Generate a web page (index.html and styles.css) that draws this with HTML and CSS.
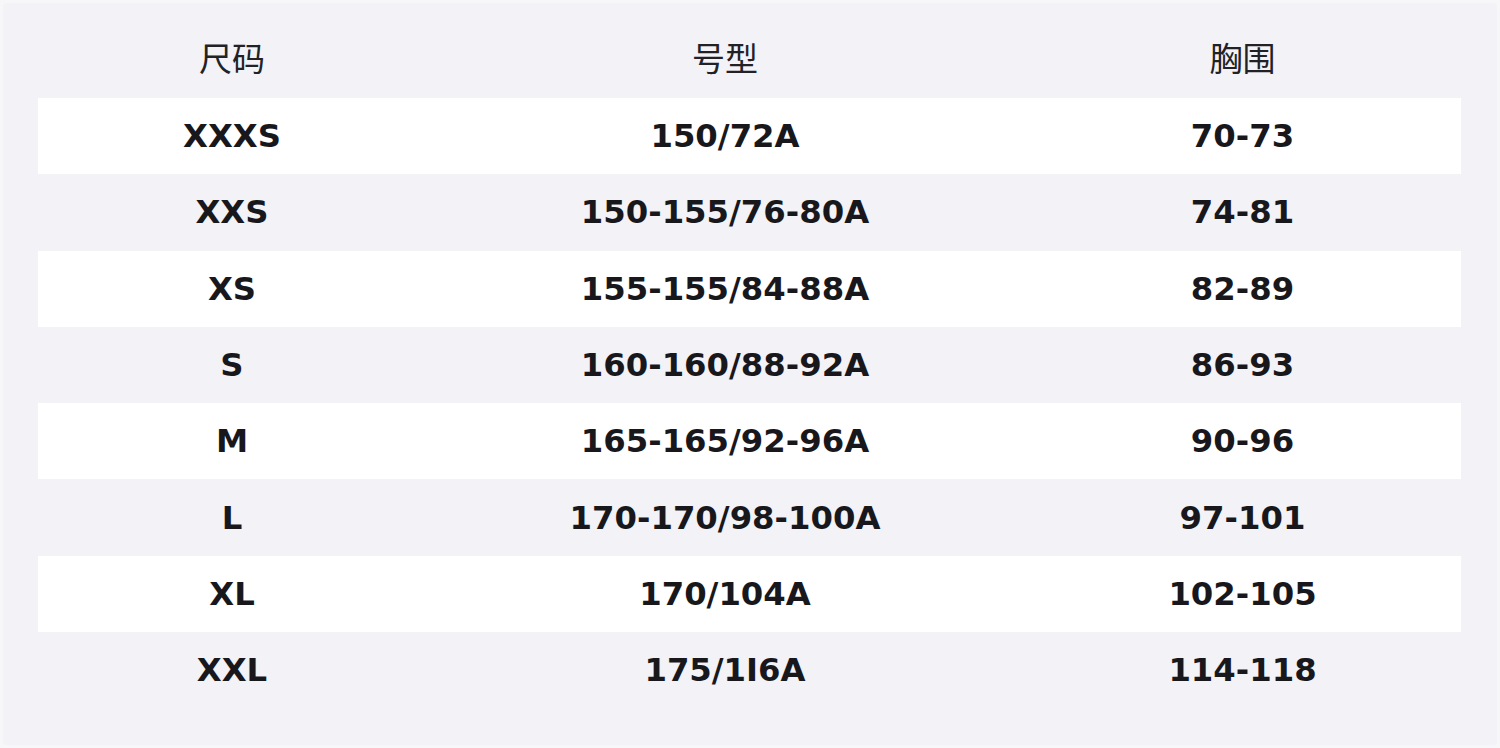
FILE: index.html
```html
<!DOCTYPE html>
<html lang="zh">
<head>
<meta charset="utf-8">
<title>尺码表</title>
<link rel="stylesheet" href="styles.css">
</head>
<body>
<div class="sheet">
  <table class="size-table">
    <colgroup>
      <col class="c1"><col class="c2"><col class="c3">
    </colgroup>
    <thead>
      <tr><th>尺码</th><th>号型</th><th>胸围</th></tr>
    </thead>
    <tbody>
      <tr><td>XXXS</td><td>150/72A</td><td>70-73</td></tr>
      <tr><td>XXS</td><td>150-155/76-80A</td><td>74-81</td></tr>
      <tr><td>XS</td><td>155-155/84-88A</td><td>82-89</td></tr>
      <tr><td>S</td><td>160-160/88-92A</td><td>86-93</td></tr>
      <tr><td>M</td><td>165-165/92-96A</td><td>90-96</td></tr>
      <tr><td>L</td><td>170-170/98-100A</td><td>97-101</td></tr>
      <tr><td>XL</td><td>170/104A</td><td>102-105</td></tr>
      <tr><td>XXL</td><td>175/1I6A</td><td>114-118</td></tr>
    </tbody>
  </table>
</div>
</body>
</html>
```
FILE: styles.css
```css
html, body {
  margin: 0;
  padding: 0;
  background: #f7f7fa;
}
body {
  width: 1500px;
  height: 748px;
  overflow: hidden;
}
.sheet {
  margin: 3px;
  height: 742px;
  box-sizing: border-box;
  background: #f2f2f7;
  border-radius: 4px;
  padding: 19px 35px 0 35px;
}
.size-table {
  width: 1423px;
  border-collapse: collapse;
  table-layout: fixed;
}
.c1 { width: 388px; }
.c2 { width: 598px; }
.c3 { width: 437px; }
.size-table th,
.size-table td {
  padding: 0;
  text-align: center;
  vertical-align: middle;
}
.size-table th {
  font-family: "Noto Sans CJK SC", "Noto Sans", sans-serif;
  font-weight: 400;
  font-size: 33px;
  color: #222226;
  padding-bottom: 6px;
  height: 70px;
}
.size-table td {
  height: 76.3px;
  font-family: "DejaVu Sans", sans-serif;
  font-weight: 700;
  font-size: 32.3px;
  color: #18181c;
}
.size-table tbody tr:nth-child(odd) {
  background: #ffffff;
}
.size-table tbody tr:nth-child(even) {
  background: #f2f2f7;
}
```
